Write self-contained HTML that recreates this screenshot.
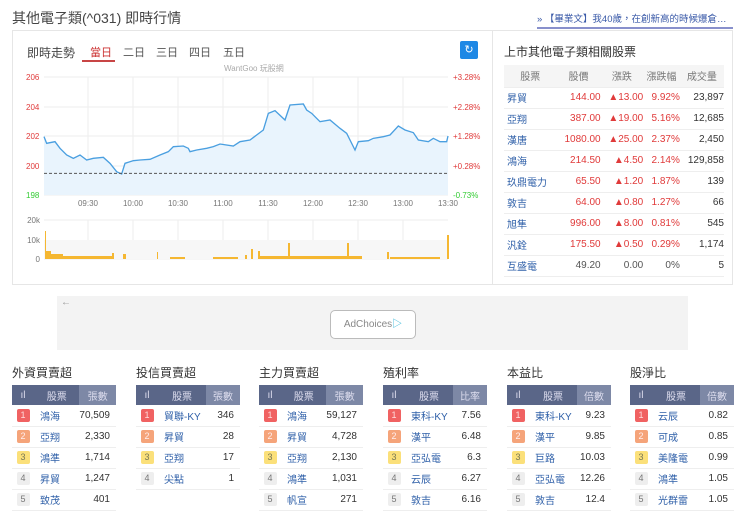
<!DOCTYPE html>
<html><head><meta charset="utf-8"><style>
*{margin:0;padding:0;box-sizing:border-box}
body{width:740px;height:518px;background:#fff;font-family:"Liberation Sans","Noto Sans CJK TC",sans-serif;color:#333;position:relative;overflow:hidden;font-size:11px}
.abs{position:absolute}
.title{left:12px;top:8px;font-size:14px;color:#444}
.link{left:537px;top:11px;font-size:9.5px;color:#3a5aa8;border-bottom:2px solid #8890cc;padding-bottom:2px;width:196px;white-space:nowrap;overflow:hidden;text-overflow:ellipsis}
.box{left:12px;top:30px;width:721px;height:255px;border:1px solid #e6e6e6}
.div{left:492px;top:30px;width:1px;height:255px;background:#e6e6e6}
.tabs{top:44px;font-size:11px}
.rt td,.rt th{height:21px;font-size:10px;font-weight:normal;border-bottom:1px solid #eee}
.rt{border-collapse:collapse;width:220px}
.rt th{background:#f5f5f5;color:#777;height:22px}
.up{color:#e03a3a;text-align:right}
.nm{color:#2e5fa8;text-align:left;padding-left:3px}
.bt{position:absolute;top:364px;width:104px}
.bt h4{font-size:12px;font-weight:normal;color:#333;height:21px}
.bt table{border-collapse:collapse;width:104px}
.bt th{background:#5a6688;color:#dde;font-weight:normal;font-size:10px;height:20px}
.bt th.l{background:#7d88a6;width:34px}
.bt td{height:21px;font-size:10px;border-bottom:1px solid #eee}
.b{display:inline-block;width:13px;height:13px;line-height:13px;text-align:center;font-size:9px;border-radius:2px;background:#eee;color:#777}
.b1{background:#f06262;color:#fdd}.b2{background:#f5a47a;color:#fee}.b3{background:#fbe07a;color:#775}
</style></head><body>
<div class="abs title">其他電子類(^031) 即時行情</div>
<div class="abs link">» 【畢業文】我40歲，在創新高的時候爆倉歸零...</div>
<div class="abs box"></div>
<div class="abs div"></div>
<div class="abs tabs" style="left:27px;font-size:12px;color:#444">即時走勢</div>
<div class="abs tabs" style="left:90px;color:#c33">當日</div>
<div class="abs" style="left:82px;top:60px;width:33px;height:2px;background:#c84545"></div>
<div class="abs tabs" style="left:123px;color:#555">二日</div>
<div class="abs tabs" style="left:156px;color:#555">三日</div>
<div class="abs tabs" style="left:189px;color:#555">四日</div>
<div class="abs tabs" style="left:223px;color:#555">五日</div>
<div class="abs" style="left:460px;top:41px;width:18px;height:18px;background:#1e88e5;border-radius:2px;color:#fff;font-size:11px;text-align:center;line-height:18px">↻</div>
<div class="abs" style="left:224px;top:63px;font-size:8px;color:#aaa">WantGoo 玩股網</div>
<svg class="abs" style="left:0;top:0" width="492" height="290">
<g stroke="#eee" stroke-width="1">
<line x1="44" y1="77" x2="448" y2="77"/><line x1="44" y1="107" x2="448" y2="107"/><line x1="44" y1="136" x2="448" y2="136"/><line x1="44" y1="166" x2="448" y2="166"/><line x1="44" y1="195" x2="448" y2="195"/>
<line x1="88" y1="77" x2="88" y2="195"/><line x1="133" y1="77" x2="133" y2="195"/><line x1="178" y1="77" x2="178" y2="195"/><line x1="223" y1="77" x2="223" y2="195"/><line x1="268" y1="77" x2="268" y2="195"/><line x1="313" y1="77" x2="313" y2="195"/><line x1="358" y1="77" x2="358" y2="195"/><line x1="403" y1="77" x2="403" y2="195"/>
<line x1="44" y1="220" x2="448" y2="220"/><line x1="44" y1="259" x2="448" y2="259"/>
<line x1="88" y1="220" x2="88" y2="259"/><line x1="133" y1="220" x2="133" y2="259"/><line x1="178" y1="220" x2="178" y2="259"/><line x1="223" y1="220" x2="223" y2="259"/><line x1="268" y1="220" x2="268" y2="259"/><line x1="313" y1="220" x2="313" y2="259"/><line x1="358" y1="220" x2="358" y2="259"/><line x1="403" y1="220" x2="403" y2="259"/>
</g>
<rect x="44" y="240" width="404" height="19" fill="#f7f7f7"/>
<g font-size="8" fill="#e03a3a"><text x="26" y="80">206</text><text x="26" y="110">204</text><text x="26" y="139">202</text><text x="26" y="169">200</text>
<text x="453" y="80">+3.28%</text><text x="453" y="110">+2.28%</text><text x="453" y="139">+1.28%</text><text x="453" y="169">+0.28%</text></g>
<g font-size="8" fill="#3c3"><text x="26" y="198">198</text><text x="453" y="198">-0.73%</text></g>
<g font-size="8" fill="#777" text-anchor="middle"><text x="88" y="206">09:30</text><text x="133" y="206">10:00</text><text x="178" y="206">10:30</text><text x="223" y="206">11:00</text><text x="268" y="206">11:30</text><text x="313" y="206">12:00</text><text x="358" y="206">12:30</text><text x="403" y="206">13:00</text><text x="448" y="206">13:30</text></g>
<g font-size="8" fill="#777" text-anchor="end"><text x="40" y="223">20k</text><text x="40" y="243">10k</text><text x="40" y="262">0</text></g>
<g fill="#f5b731">
<rect x="45" y="231" width="1" height="28"/><rect x="46" y="251" width="5" height="8"/><rect x="51" y="254" width="12" height="5"/><rect x="63" y="256" width="50" height="3"/><rect x="112" y="253" width="2" height="6"/><rect x="123" y="254" width="3" height="5"/><rect x="157" y="252" width="1" height="7"/><rect x="170" y="257" width="15" height="2"/><rect x="213" y="257" width="25" height="2"/><rect x="245" y="255" width="2" height="4"/><rect x="251" y="249" width="2" height="10"/><rect x="258" y="251" width="2" height="8"/><rect x="260" y="256" width="30" height="3"/><rect x="288" y="243" width="2" height="16"/><rect x="290" y="256" width="60" height="3"/><rect x="347" y="243" width="2" height="16"/><rect x="350" y="256" width="12" height="3"/><rect x="387" y="252" width="2" height="7"/><rect x="390" y="257" width="50" height="2"/><rect x="447" y="235" width="2" height="24"/>
</g>
<svg x="40" y="70" width="420" height="130" viewBox="0 0 1260 390">
<polygon fill="#e9f4fd" points="12,200 20,220 45,215 60,235 80,255 100,265 120,255 140,270 160,265 190,262 210,280 230,305 245,312 255,280 280,272 300,270 330,268 360,255 385,245 400,230 430,228 445,235 450,245 470,240 500,235 520,230 540,222 580,228 600,215 630,210 650,195 670,180 685,130 705,122 735,150 750,105 790,102 800,120 815,130 840,155 870,150 900,175 920,190 945,240 955,215 985,212 1000,205 1030,200 1050,195 1075,168 1095,180 1120,188 1135,210 1165,215 1180,205 1200,215 1220,215 1224,198 1224,375 12,375"/>
<polyline fill="none" stroke="#4a9fe0" stroke-width="4" points="12,200 20,220 45,215 60,235 80,255 100,265 120,255 140,270 160,265 190,262 210,280 230,305 245,312 255,280 280,272 300,270 330,268 360,255 385,245 400,230 430,228 445,235 450,245 470,240 500,235 520,230 540,222 580,228 600,215 630,210 650,195 670,180 685,130 705,122 735,150 750,105 790,102 800,120 815,130 840,155 870,150 900,175 920,190 945,240 955,215 985,212 1000,205 1030,200 1050,195 1075,168 1095,180 1120,188 1135,210 1165,215 1180,205 1200,215 1220,215 1224,198"/>
<line x1="12" y1="310" x2="1224" y2="310" stroke="#555" stroke-width="3" stroke-dasharray="9,6"/>
</svg>
</svg>
<div class="abs" style="left:504px;top:43px;font-size:12px;color:#333">上市其他電子類相關股票</div>
<table class="abs rt" style="left:504px;top:65px">
<tr><th>股票</th><th>股價</th><th>漲跌</th><th>漲跌幅</th><th>成交量</th></tr>
<tr><td class="nm">昇貿</td><td class="up">144.00</td><td class="up">▲13.00</td><td class="up">9.92%</td><td style="text-align:right">23,897</td></tr>
<tr><td class="nm">亞翔</td><td class="up">387.00</td><td class="up">▲19.00</td><td class="up">5.16%</td><td style="text-align:right">12,685</td></tr>
<tr><td class="nm">漢唐</td><td class="up">1080.00</td><td class="up">▲25.00</td><td class="up">2.37%</td><td style="text-align:right">2,450</td></tr>
<tr><td class="nm">鴻海</td><td class="up">214.50</td><td class="up">▲4.50</td><td class="up">2.14%</td><td style="text-align:right">129,858</td></tr>
<tr><td class="nm">玖鼎電力</td><td class="up">65.50</td><td class="up">▲1.20</td><td class="up">1.87%</td><td style="text-align:right">139</td></tr>
<tr><td class="nm">敦吉</td><td class="up">64.00</td><td class="up">▲0.80</td><td class="up">1.27%</td><td style="text-align:right">66</td></tr>
<tr><td class="nm">旭隼</td><td class="up">996.00</td><td class="up">▲8.00</td><td class="up">0.81%</td><td style="text-align:right">545</td></tr>
<tr><td class="nm">汎銓</td><td class="up">175.50</td><td class="up">▲0.50</td><td class="up">0.29%</td><td style="text-align:right">1,174</td></tr>
<tr><td class="nm">互盛電</td><td style="text-align:right;color:#555">49.20</td><td style="text-align:right;color:#555">0.00</td><td style="text-align:right;color:#555">0%</td><td style="text-align:right">5</td></tr>
</table>
<div class="abs" style="left:57px;top:296px;width:631px;height:54px;background:#f3f3f3"></div>
<div class="abs" style="left:61px;top:297px;font-size:10px;color:#999">←</div>
<div class="abs" style="left:330px;top:310px;width:86px;height:29px;border:1px solid #bbb;border-radius:5px;background:#fff;font-size:10px;color:#888;text-align:center;line-height:27px">AdChoices<span style="color:#2bb3d6">▷</span></div>

<div class="bt" style="left:12px"><h4>外資買賣超</h4><table><tr><th style="width:22px">ıl</th><th>股票</th><th class="l">張數</th></tr>
<tr><td align="center"><span class="b b1">1</span></td><td class="nm" style="padding-left:6px">鴻海</td><td style="text-align:right;padding-right:6px">70,509</td></tr>
<tr><td align="center"><span class="b b2">2</span></td><td class="nm" style="padding-left:6px">亞翔</td><td style="text-align:right;padding-right:6px">2,330</td></tr>
<tr><td align="center"><span class="b b3">3</span></td><td class="nm" style="padding-left:6px">鴻準</td><td style="text-align:right;padding-right:6px">1,714</td></tr>
<tr><td align="center"><span class="b">4</span></td><td class="nm" style="padding-left:6px">昇貿</td><td style="text-align:right;padding-right:6px">1,247</td></tr>
<tr><td align="center"><span class="b">5</span></td><td class="nm" style="padding-left:6px">致茂</td><td style="text-align:right;padding-right:6px">401</td></tr></table></div>

<div class="bt" style="left:136px"><h4>投信買賣超</h4><table><tr><th style="width:22px">ıl</th><th>股票</th><th class="l">張數</th></tr>
<tr><td align="center"><span class="b b1">1</span></td><td class="nm" style="padding-left:6px">貿聯-KY</td><td style="text-align:right;padding-right:6px">346</td></tr>
<tr><td align="center"><span class="b b2">2</span></td><td class="nm" style="padding-left:6px">昇貿</td><td style="text-align:right;padding-right:6px">28</td></tr>
<tr><td align="center"><span class="b b3">3</span></td><td class="nm" style="padding-left:6px">亞翔</td><td style="text-align:right;padding-right:6px">17</td></tr>
<tr><td align="center"><span class="b">4</span></td><td class="nm" style="padding-left:6px">尖點</td><td style="text-align:right;padding-right:6px">1</td></tr></table></div>

<div class="bt" style="left:259px"><h4>主力買賣超</h4><table><tr><th style="width:22px">ıl</th><th>股票</th><th class="l">張數</th></tr>
<tr><td align="center"><span class="b b1">1</span></td><td class="nm" style="padding-left:6px">鴻海</td><td style="text-align:right;padding-right:6px">59,127</td></tr>
<tr><td align="center"><span class="b b2">2</span></td><td class="nm" style="padding-left:6px">昇貿</td><td style="text-align:right;padding-right:6px">4,728</td></tr>
<tr><td align="center"><span class="b b3">3</span></td><td class="nm" style="padding-left:6px">亞翔</td><td style="text-align:right;padding-right:6px">2,130</td></tr>
<tr><td align="center"><span class="b">4</span></td><td class="nm" style="padding-left:6px">鴻準</td><td style="text-align:right;padding-right:6px">1,031</td></tr>
<tr><td align="center"><span class="b">5</span></td><td class="nm" style="padding-left:6px">帆宣</td><td style="text-align:right;padding-right:6px">271</td></tr></table></div>

<div class="bt" style="left:383px"><h4>殖利率</h4><table><tr><th style="width:22px">ıl</th><th>股票</th><th class="l">比率</th></tr>
<tr><td align="center"><span class="b b1">1</span></td><td class="nm" style="padding-left:6px">東科-KY</td><td style="text-align:right;padding-right:6px">7.56</td></tr>
<tr><td align="center"><span class="b b2">2</span></td><td class="nm" style="padding-left:6px">漢平</td><td style="text-align:right;padding-right:6px">6.48</td></tr>
<tr><td align="center"><span class="b b3">3</span></td><td class="nm" style="padding-left:6px">亞弘電</td><td style="text-align:right;padding-right:6px">6.3</td></tr>
<tr><td align="center"><span class="b">4</span></td><td class="nm" style="padding-left:6px">云辰</td><td style="text-align:right;padding-right:6px">6.27</td></tr>
<tr><td align="center"><span class="b">5</span></td><td class="nm" style="padding-left:6px">敦吉</td><td style="text-align:right;padding-right:6px">6.16</td></tr></table></div>

<div class="bt" style="left:507px"><h4>本益比</h4><table><tr><th style="width:22px">ıl</th><th>股票</th><th class="l">倍數</th></tr>
<tr><td align="center"><span class="b b1">1</span></td><td class="nm" style="padding-left:6px">東科-KY</td><td style="text-align:right;padding-right:6px">9.23</td></tr>
<tr><td align="center"><span class="b b2">2</span></td><td class="nm" style="padding-left:6px">漢平</td><td style="text-align:right;padding-right:6px">9.85</td></tr>
<tr><td align="center"><span class="b b3">3</span></td><td class="nm" style="padding-left:6px">巨路</td><td style="text-align:right;padding-right:6px">10.03</td></tr>
<tr><td align="center"><span class="b">4</span></td><td class="nm" style="padding-left:6px">亞弘電</td><td style="text-align:right;padding-right:6px">12.26</td></tr>
<tr><td align="center"><span class="b">5</span></td><td class="nm" style="padding-left:6px">敦吉</td><td style="text-align:right;padding-right:6px">12.4</td></tr></table></div>

<div class="bt" style="left:630px"><h4>股淨比</h4><table><tr><th style="width:22px">ıl</th><th>股票</th><th class="l">倍數</th></tr>
<tr><td align="center"><span class="b b1">1</span></td><td class="nm" style="padding-left:6px">云辰</td><td style="text-align:right;padding-right:6px">0.82</td></tr>
<tr><td align="center"><span class="b b2">2</span></td><td class="nm" style="padding-left:6px">可成</td><td style="text-align:right;padding-right:6px">0.85</td></tr>
<tr><td align="center"><span class="b b3">3</span></td><td class="nm" style="padding-left:6px">美隆電</td><td style="text-align:right;padding-right:6px">0.99</td></tr>
<tr><td align="center"><span class="b">4</span></td><td class="nm" style="padding-left:6px">鴻準</td><td style="text-align:right;padding-right:6px">1.05</td></tr>
<tr><td align="center"><span class="b">5</span></td><td class="nm" style="padding-left:6px">光群雷</td><td style="text-align:right;padding-right:6px">1.05</td></tr></table></div>
</body></html>
